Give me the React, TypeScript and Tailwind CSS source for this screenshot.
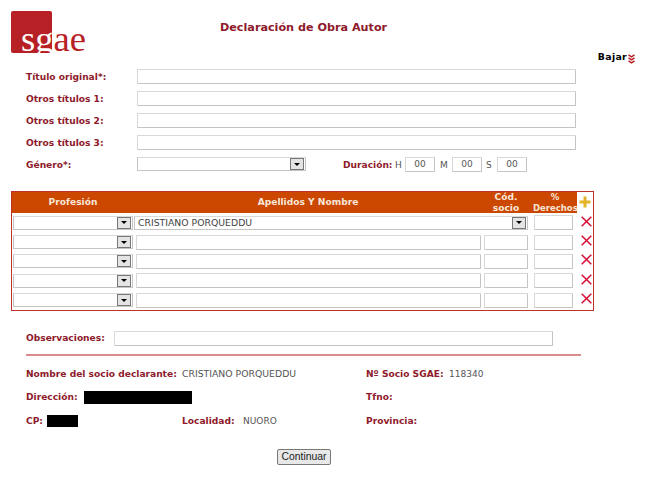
const labelClass = "text-[9.1px] leading-[14px] font-bold text-[#8e1a2b] whitespace-nowrap";
const valueClass = "text-[9px] leading-[14px] text-[#555] whitespace-nowrap";
const inputClass = "block h-[15px] bg-white border border-[#c4c4c4] border-t-[#d8d8d8] border-l-[#d8d8d8] rounded-[1px] text-[9px] text-[#555] px-[3px] outline-none";

const Combo = ({ className, value }: { className: string; value?: string }) => (
  <div className={`flex h-[14px] items-center justify-between bg-white border border-[#c4c4c4] border-t-[#d8d8d8] pl-[3px] pr-px ${className}`}>
    <span className="text-[9.3px] leading-[12px] text-[#444] whitespace-nowrap">{value}</span>
    <span className="flex h-[12px] w-[14px] items-center justify-center bg-[#e4e4e4] border border-[#777]">
      <span className="block h-0 w-0 border-x-[3px] border-t-[3px] border-x-transparent border-t-black" />
    </span>
  </div>
);

const TitleRow = ({ label }: { label: string }) => (
  <div className="flex h-[22px] items-center">
    <span className={`w-[111px] pt-[2px] ${labelClass}`}>{label}</span>
    <input className={`${inputClass} w-[439px]`} />
  </div>
);

const AuthorRow = ({ name }: { name?: string }) => (
  <div className="flex h-[19.4px] items-center">
    <Combo className="ml-px w-[120px]" />
    {name ? (
      <Combo className="ml-px w-[394px]" value={name} />
    ) : (
      <>
        <input className={`${inputClass} ml-[3px] w-[345px]`} />
        <input className={`${inputClass} ml-[3px] w-[44px]`} />
      </>
    )}
    <input className={`${inputClass} ml-[6px] w-[39px]`} />
    <svg className="ml-[8px] mb-[3px] shrink-0" width="11" height="11" viewBox="0 0 11 11">
      <path d="M0.7 0.7 L10.3 10.3 M10.3 0.7 L0.7 10.3" fill="none" stroke="#d8143a" strokeWidth="1.6" />
    </svg>
  </div>
);

export default function App() {
  return (
    <div className="w-[650px] h-[477px] overflow-hidden bg-white font-['DejaVu_Sans',Verdana,sans-serif]">
      {/* Cabecera */}
      <div className="flex h-[68px] pl-[11px] pt-[11px]">
        <div className="relative h-[42px] w-[75px] shrink-0">
          <div className="h-[42px] w-[41px] rounded-[2px] bg-[#b72025]" />
          <span className="absolute left-[10px] top-[8px] text-[36.6px] leading-[40px] text-[#b72025] font-['Liberation_Serif',serif]">
            <span className="text-white">sg</span>ae
          </span>
        </div>
        <h1 className="ml-[134px] mt-[10px] text-[11.2px] leading-[14px] font-bold text-[#8e1a2b] whitespace-nowrap">
          Declaración de Obra Autor
        </h1>
        <div className="ml-auto mr-[15px] mt-[39px] flex h-[14px] items-center">
          <span className="text-[9.4px] font-bold leading-[14px] tracking-[0.3px] text-black">Bajar</span>
          <svg className="ml-px mt-[3px]" width="7" height="10" viewBox="0 0 7 10">
            <path d="M0.5 0.8 L3.5 2.8 L6.5 0.8 M0.5 3.8 L3.5 5.8 L6.5 3.8 M0.5 6.8 L3.5 8.8 L6.5 6.8" fill="none" stroke="#b72025" strokeWidth="1.5" />
          </svg>
        </div>
      </div>

      {/* Datos de la obra */}
      <div className="pl-[26px] mt-[-3px]">
        <TitleRow label="Título original*:" />
        <TitleRow label="Otros títulos 1:" />
        <TitleRow label="Otros títulos 2:" />
        <TitleRow label="Otros títulos 3:" />
        <div className="flex h-[22px] items-center">
          <span className={`w-[111px] pt-[2px] ${labelClass}`}>Género*:</span>
          <Combo className="w-[169px]" />
          <span className={`ml-[37px] w-[49px] pt-[2px] ${labelClass}`}>Duración:</span>
          <span className={`ml-[3px] w-[10px] pt-[2px] ${valueClass}`}>H</span>
          <input className={`${inputClass} w-[30px] text-center`} defaultValue="00" />
          <span className={`ml-[5px] w-[12px] pt-[2px] ${valueClass}`}>M</span>
          <input className={`${inputClass} w-[30px] text-center`} defaultValue="00" />
          <span className={`ml-[4px] w-[11px] pt-[2px] ${valueClass}`}>S</span>
          <input className={`${inputClass} w-[30px] text-center`} defaultValue="00" />
        </div>
      </div>

      {/* Tabla de autores */}
      <div className="ml-[11px] mt-[16px] w-[583px] border border-[#c0302a]">
        <div className="flex h-[21px]">
          <div className="flex w-[565px] items-center bg-[#cc4700] text-[9.1px] font-bold text-[#f8e6d8]">
            <span className="w-[122px] text-center">Profesión</span>
            <span className="w-[348px] text-center">Apellidos Y Nombre</span>
            <span className="w-[48px] text-center leading-[10.5px]">Cód.<br />socio</span>
            <span className="ml-[3px] w-[44px] text-center text-[8.5px] leading-[10.5px] whitespace-nowrap">%<br />Derechos</span>
          </div>
          <div className="flex flex-1 items-center justify-center pb-[2px]">
            <svg width="12" height="12" viewBox="0 0 12 12">
              <path d="M6 0.5 V11.5 M0.5 6 H11.5" fill="none" stroke="#e3b32a" strokeWidth="3" />
            </svg>
          </div>
        </div>
        <AuthorRow name="CRISTIANO PORQUEDDU" />
        <AuthorRow />
        <AuthorRow />
        <AuthorRow />
        <AuthorRow />
      </div>

      {/* Observaciones */}
      <div className="ml-[26px] mt-[20px] flex items-center">
        <span className={`w-[88px] ${labelClass}`}>Observaciones:</span>
        <input className={`${inputClass} w-[439px]`} />
      </div>
      <div className="ml-[26px] mt-[8px] h-[2px] w-[555px] bg-[#d98a8a]" />

      {/* Datos del socio */}
      <div className="ml-[26px] mt-[11px] grid grid-cols-[156px_184px_auto] gap-y-[9.5px] w-[555px]">
        <div className="col-span-2 flex h-[14px] items-center">
          <span className={`w-[156px] ${labelClass}`}>Nombre del socio declarante:</span>
          <span className="text-[9.3px] leading-[14px] text-[#555] whitespace-nowrap">CRISTIANO PORQUEDDU</span>
        </div>
        <div className="flex h-[14px] items-center">
          <span className={`w-[83px] ${labelClass}`}>Nº Socio SGAE:</span>
          <span className={valueClass}>118340</span>
        </div>
        <div className="col-span-2 flex h-[14px] items-center">
          <span className={`w-[58px] ${labelClass}`}>Dirección:</span>
          <span className="h-[13px] w-[108px] bg-black" />
        </div>
        <span className={labelClass}>Tfno:</span>
        <div className="flex h-[14px] items-center">
          <span className={`w-[21px] ${labelClass}`}>CP:</span>
          <span className="h-[12px] w-[31px] bg-black" />
        </div>
        <div className="flex h-[14px] items-center">
          <span className={`w-[61px] ${labelClass}`}>Localidad:</span>
          <span className={valueClass}>NUORO</span>
        </div>
        <span className={labelClass}>Provincia:</span>
      </div>

      <div className="ml-[277px] mt-[21px]">
        <button className="block h-[16px] w-[54px] rounded-[2px] border border-[#777] bg-[#e8e8e8] text-[10.4px] leading-[13px] text-[#222] font-['Liberation_Sans',sans-serif]">
          Continuar
        </button>
      </div>
    </div>
  );
}
